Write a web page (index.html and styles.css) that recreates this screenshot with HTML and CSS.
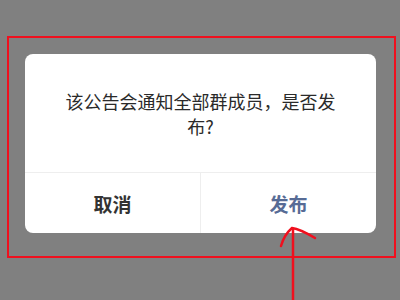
FILE: index.html
```html
<!DOCTYPE html>
<html lang="zh">
<head>
<meta charset="utf-8">
<link rel="stylesheet" href="styles.css">
</head>
<body>
<div class="dialog">
  <div class="msg">该公告会通知全部群成员，是否发布?</div>
  <div class="actions">
    <div class="btn cancel">取消</div>
    <div class="btn ok">发布</div>
  </div>
</div>
<div class="frame"></div>
<svg class="arrow" width="400" height="300" viewBox="0 0 400 300">
  <path d="M293 300 L293 229" />
  <path d="M281 246 Q284 235 292 228 Q300 229 315 238" />
</svg>
</body>
</html>
```
FILE: styles.css
```css
html, body {
  margin: 0;
  padding: 0;
}
body {
  width: 400px;
  height: 300px;
  overflow: hidden;
  background: #808080;
  position: relative;
  font-family: "Noto Sans CJK SC", "Noto Sans", sans-serif;
  padding-top: 54px;
  box-sizing: border-box;
}
.dialog {
  margin-left: 25px;
  width: 351px;
  background: #fff;
  border-radius: 8px;
  overflow: hidden;
}
.msg {
  padding: 35px 36px 33px;
  font-size: 18px;
  line-height: 25px;
  text-align: center;
  color: #2a2a2a;
}
.actions {
  display: flex;
  border-top: 1px solid #eeeeee;
  height: 60px;
}
.btn {
  flex: 1;
  display: flex;
  align-items: center;
  justify-content: center;
  font-size: 19px;
  font-weight: bold;
}
.btn + .btn {
  border-left: 1px solid #eeeeee;
}
.cancel {
  color: #333333;
}
.ok {
  color: #576b95;
}
.frame {
  position: absolute;
  left: 7px;
  top: 36px;
  width: 389px;
  height: 222px;
  box-sizing: border-box;
  border: 2px solid #f0101e;
}
.arrow {
  position: absolute;
  left: 0;
  top: 0;
  fill: none;
  stroke: #f0101e;
  stroke-width: 2.5;
  stroke-linecap: round;
}
```
